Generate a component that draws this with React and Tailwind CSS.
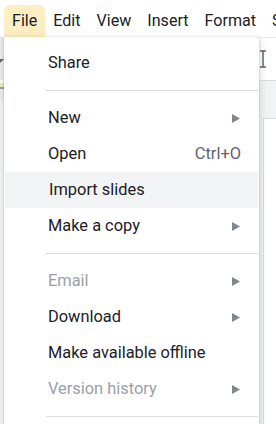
const items = [
  { type: 'item', label: 'Share' },
  { type: 'sep' },
  { type: 'item', label: 'New', arrow: true },
  { type: 'item', label: 'Open', shortcut: 'Ctrl+O' },
  { type: 'item', label: 'Import slides', active: true },
  { type: 'item', label: 'Make a copy', arrow: true },
  { type: 'sep' },
  { type: 'item', label: 'Email', arrow: true, disabled: true },
  { type: 'item', label: 'Download', arrow: true },
  { type: 'item', label: 'Make available offline' },
  { type: 'item', label: 'Version history', arrow: true, disabled: true },
  { type: 'sep' },
];

const Arrow = () => (
  <svg className="w-[8px] h-[9px]" viewBox="0 0 8 9">
    <polygon points="0,0 8,4.5 0,9" fill="#80868b" />
  </svg>
);

export default function App() {
  return (
    <div
      className="relative w-[276px] h-[424px] overflow-hidden bg-white"
      style={{ fontFamily: 'Roboto, "Liberation Sans", sans-serif' }}
    >
      {/* Menu bar */}
      <div className="h-[37px] flex items-end pl-[4px] text-[16.1px] text-[#202124] whitespace-nowrap">
        <div className="h-[32px] px-2 flex items-center bg-[#feefc3] rounded-t-[6px]">File</div>
        <div className="h-[32px] px-2 flex items-center">Edit</div>
        <div className="h-[32px] px-2 flex items-center">View</div>
        <div className="h-[32px] px-2 flex items-center">Insert</div>
        <div className="h-[32px] px-2 flex items-center">Format</div>
        <div className="h-[32px] px-2 flex items-center">Slide</div>
      </div>

      {/* Toolbar */}
      <div className="h-[43px] flex border-t border-[#e8eaed]">
        <div className="w-[5px] bg-[#eef0f1] relative">
          <svg className="absolute left-0 top-[21px] w-[4px] h-[4px]" viewBox="0 0 4 4">
            <polygon points="0,0 4,0 0,4" fill="#5f6368" />
          </svg>
        </div>
        <div className="flex-1 flex items-center justify-end pr-[8px]">
          <svg className="w-[10px] h-[20px]" viewBox="0 0 10 20" fill="none" stroke="#5f6368" strokeWidth="1.5">
            <path d="M5 2v16M2 2h6M2 18h6" />
          </svg>
        </div>
      </div>

      {/* Ruler row */}
      <div className="h-[20px] flex bg-[#f1f3f4]">
        <div className="w-[5px] flex flex-col">
          <div className="h-[3px] bg-white" />
          <div className="h-[4px] bg-[#f6ecc6]" />
          <div className="h-[2px] bg-[#9aa0a6]" />
          <div className="flex-1 bg-[#eef0f1]" />
        </div>
        <div className="flex-1 border-t border-[#dadce0]" />
      </div>

      {/* Canvas */}
      <div className="flex h-[330px]">
        <div className="w-[5px] bg-[#f8f9fa]" />
        <div className="flex-1 bg-[#f1f3f4] pt-[18px] pl-[258px]">
          <div className="h-full bg-white border-l border-t border-[#dadce0]" />
        </div>
      </div>

      {/* File menu dropdown */}
      <div className="absolute left-[4px] top-[37px] w-[255px] bg-white rounded-tr-[4px] shadow-[0_2px_6px_2px_rgba(60,64,67,0.15),0_1px_2px_rgba(60,64,67,0.3)] pt-[8px] pb-[8px]">
        {items.map((it, i) =>
          it.type === 'sep' ? (
            <div key={i} className="ml-[42px] mr-[1px] my-[9px] h-px bg-[#dadce0]" />
          ) : (
            <div
              key={i}
              className={`h-[36px] flex items-center pl-[44px] pr-[18px] text-[16.4px] ${
                it.active ? 'bg-[#f1f3f4] mx-[1px] pl-[43px] pr-[17px]' : ''
              } ${it.disabled ? 'text-[#9aa0a6]' : 'text-[#202124]'}`}
            >
              <span className="flex-1 whitespace-nowrap">{it.label}</span>
              {it.shortcut && <span className="text-[#5f6368]">{it.shortcut}</span>}
              {it.arrow && (
                <span className="pr-[1px]">
                  <Arrow />
                </span>
              )}
            </div>
          )
        )}
      </div>
    </div>
  );
}
